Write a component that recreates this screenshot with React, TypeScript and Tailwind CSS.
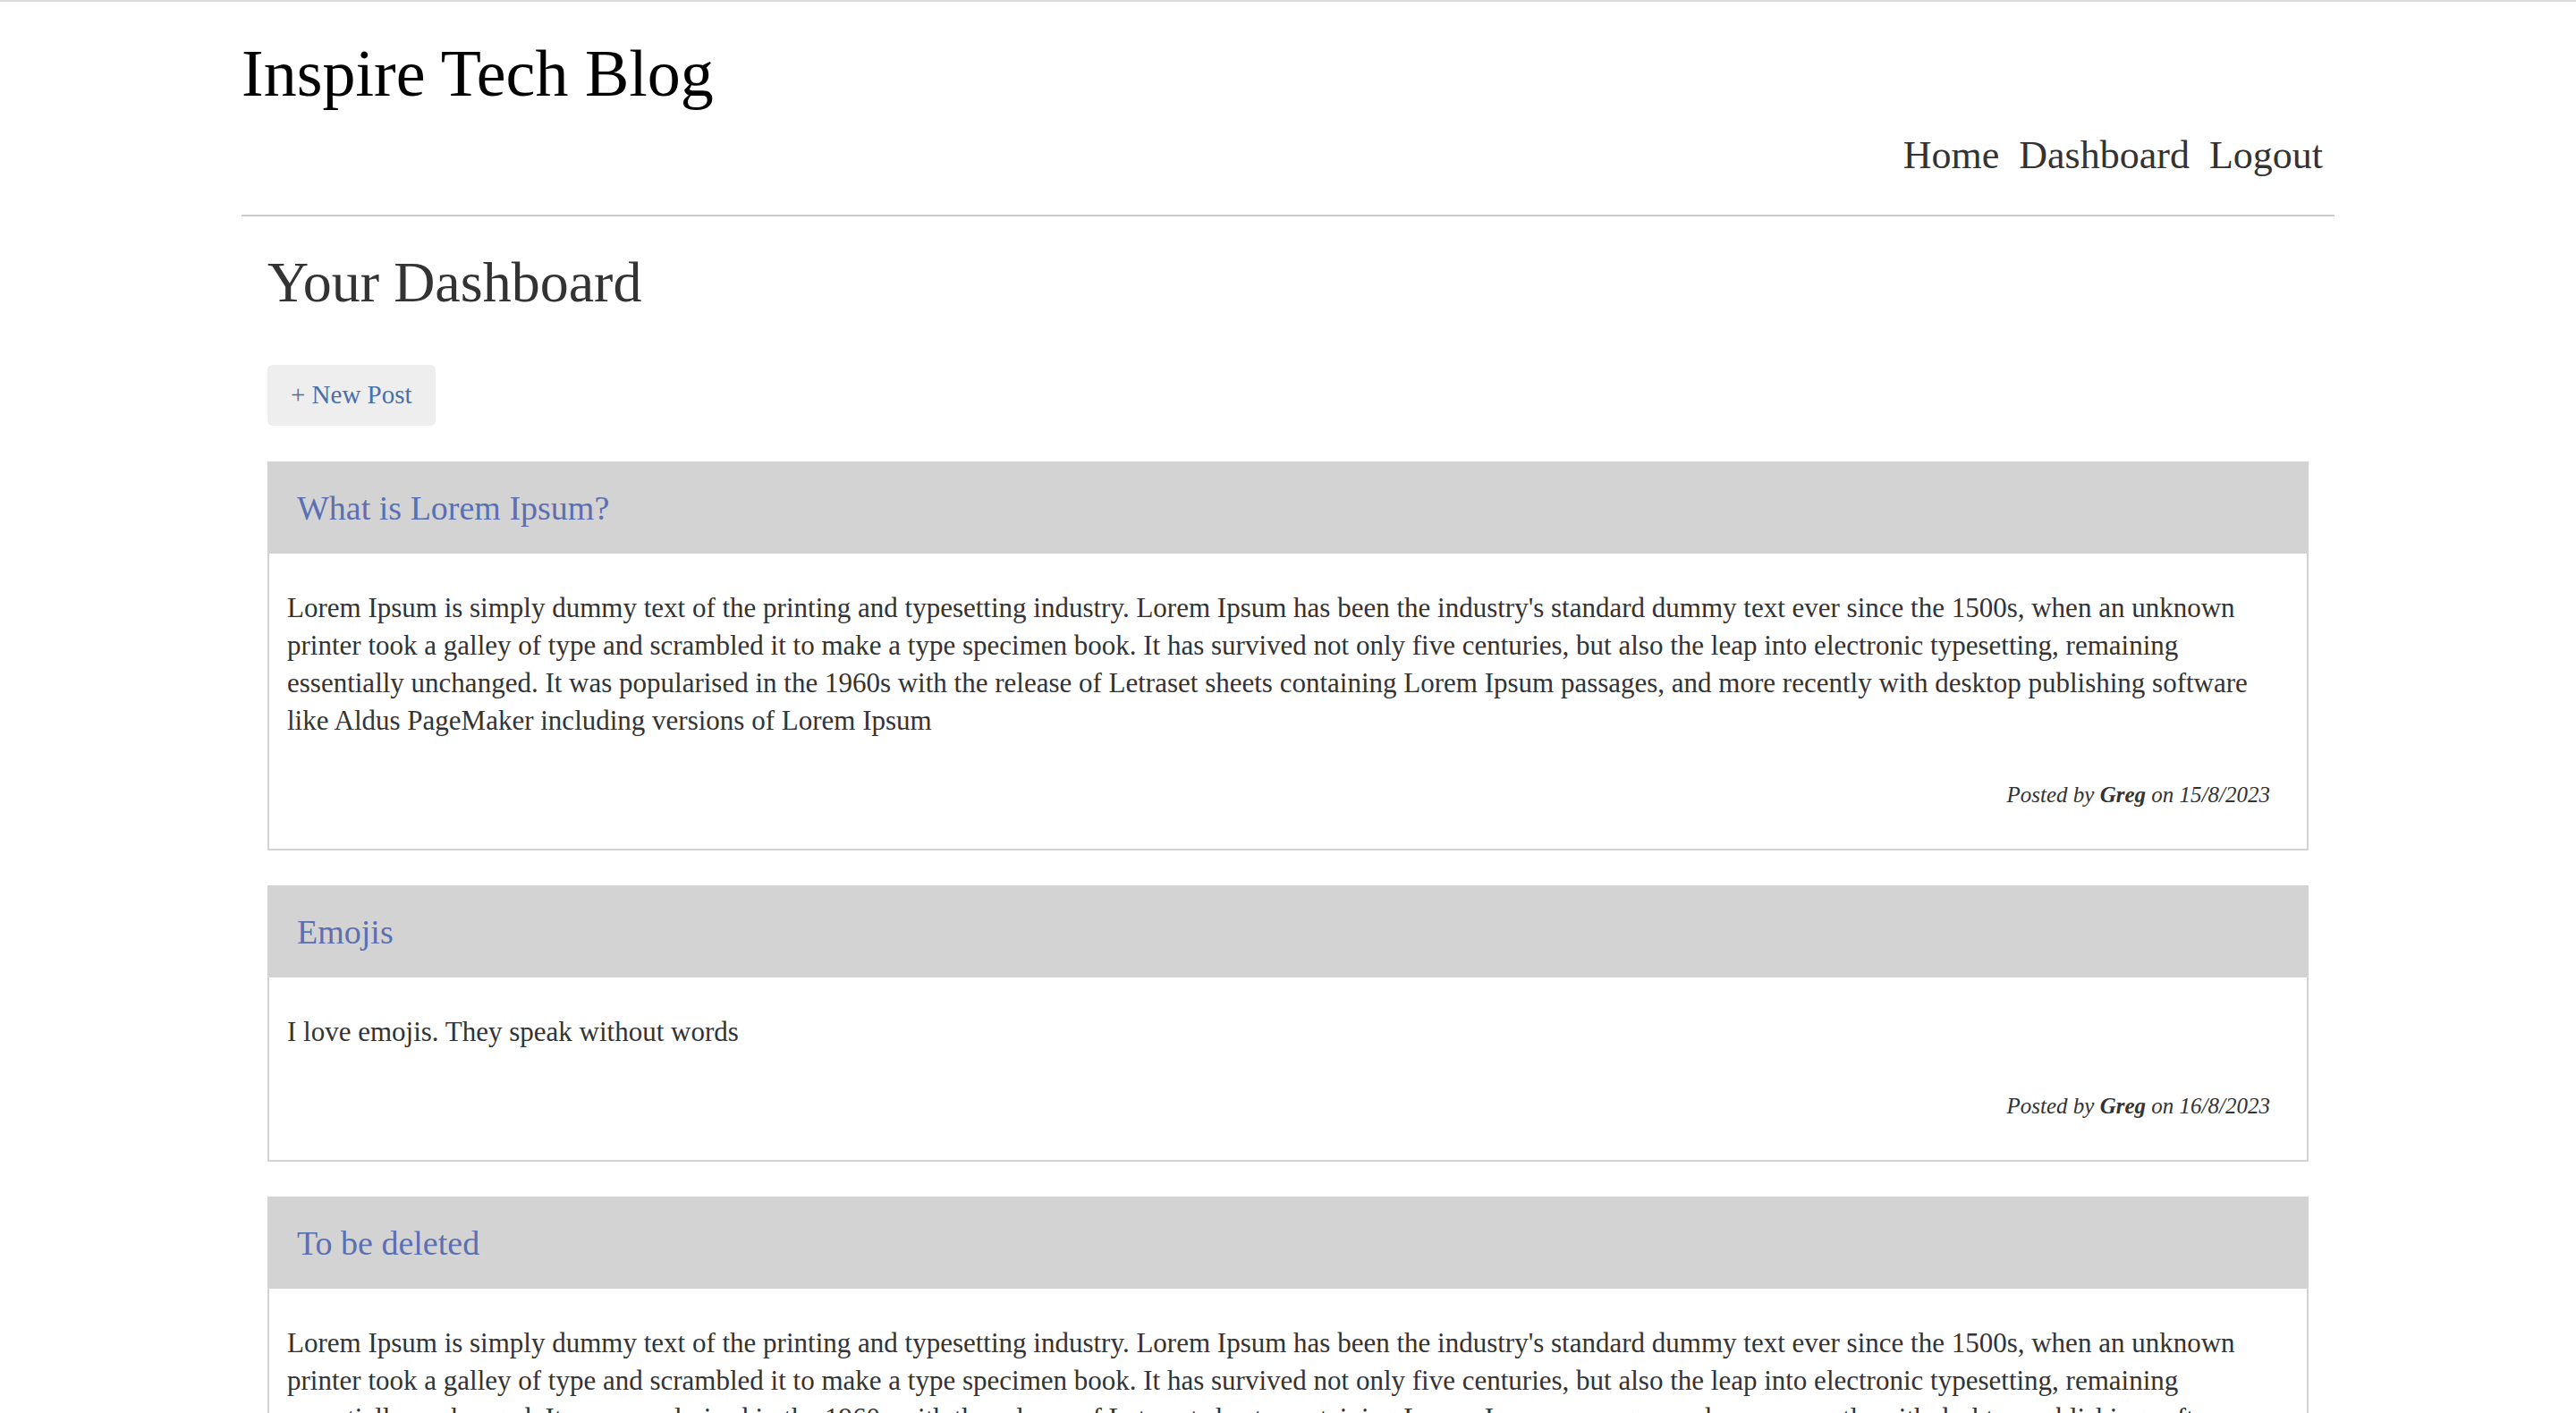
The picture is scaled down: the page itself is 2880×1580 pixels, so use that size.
import React from 'react';

type Post = {
  title: string;
  body: string;
  author: string;
  date: string;
};

const lorem =
  "Lorem Ipsum is simply dummy text of the printing and typesetting industry. Lorem Ipsum has been the industry's standard dummy text ever since the 1500s, when an unknown printer took a galley of type and scrambled it to make a type specimen book. It has survived not only five centuries, but also the leap into electronic typesetting, remaining essentially unchanged. It was popularised in the 1960s with the release of Letraset sheets containing Lorem Ipsum passages, and more recently with desktop publishing software like Aldus PageMaker including versions of Lorem Ipsum";

const posts: Post[] = [
  { title: 'What is Lorem Ipsum?', body: lorem, author: 'Greg', date: '15/8/2023' },
  { title: 'Emojis', body: 'I love emojis. They speak without words', author: 'Greg', date: '16/8/2023' },
  { title: 'To be deleted', body: lorem, author: 'Greg', date: '17/8/2023' },
];

function PostCard({ post }: { post: Post }) {
  return (
    <article className="border-2 border-[#d3d3d3] bg-white">
      {/* Card header */}
      <div className="bg-[#d3d3d3] px-[31px] py-[29px]">
        <h2 className="text-[38px] leading-[43px] text-[#5b70b3]">{post.title}</h2>
      </div>

      {/* Card body */}
      <div className="px-[20px] pt-[40px] pb-[40px]">
        <p className="text-[31px] leading-[42px] text-[#333]">{post.body}</p>
        <p className="mt-[42px] mr-[21px] text-right text-[25px] leading-[40px] italic text-[#333]">
          Posted by <span className="font-bold">{post.author}</span> on {post.date}
        </p>
      </div>
    </article>
  );
}

export default function App() {
  return (
    <div className="min-h-screen bg-white border-t-2 border-[#dcdcdc] font-['Liberation_Serif',serif]">
      {/* Header */}
      <header className="w-[2340px] mx-auto flex flex-col border-b-2 border-[#cccccc] pt-[36px] pb-[40px]">
        <h1 className="text-[74px] leading-[89px] text-black">Inspire Tech Blog</h1>
        <nav className="self-end mt-[20px] mr-[13px] flex gap-[22px] text-[44px] leading-[53px] text-[#333]">
          <a href="#">Home</a>
          <a href="#">Dashboard</a>
          <a href="#">Logout</a>
        </nav>
      </header>

      {/* Dashboard */}
      <main className="w-[2282px] mx-auto pt-[35px] pb-[60px]">
        <h2 className="text-[64px] leading-[77px] text-[#333]">Your Dashboard</h2>

        <button className="mt-[54px] h-[68px] px-[26px] rounded-[6px] bg-[#eeeeee] text-[29px] text-[#4a6fa8]">
          + New Post
        </button>

        <div className="mt-[40px] flex flex-col gap-[39px]">
          {posts.map((post) => (
            <PostCard key={post.title} post={post} />
          ))}
        </div>
      </main>
    </div>
  );
}
